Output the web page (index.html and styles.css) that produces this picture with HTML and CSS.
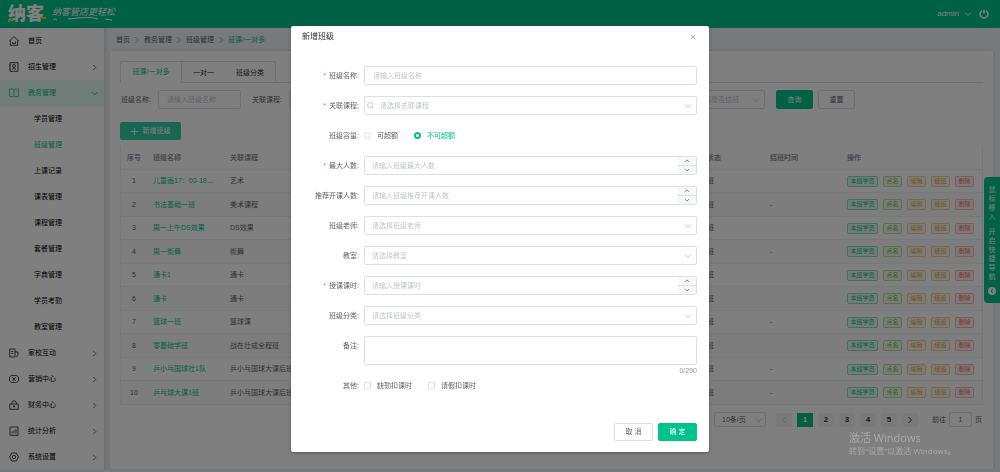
FILE: index.html
```html
<!DOCTYPE html>
<html lang="zh-CN">
<head>
  <meta charset="UTF-8">
  <title>班级管理</title>
  <link rel="stylesheet" href="styles.css">
</head>
<body>
  <svg class="defs" aria-hidden="true">
    <symbol id="down" viewBox="0 0 8 8"><path d="M1 2.5l3 3 3-3"/></symbol>
    <symbol id="up" viewBox="0 0 8 8"><path d="M1 5.5l3-3 3 3"/></symbol>
    <symbol id="right" viewBox="0 0 8 8"><path d="M2.5 1l3 3-3 3"/></symbol>
    <symbol id="left" viewBox="0 0 8 8"><path d="M5.5 1l-3 3 3 3"/></symbol>
  </svg>

  <header class="header">
    <div class="logo">
      纳客
      <svg class="logo-mark" viewBox="0 0 38 6"><path d="M0 5l5-3M32 1h6"/></svg>
    </div>
    <div class="slogan">
      纳客管店更轻松
      <svg viewBox="0 0 66 4"><path d="M1 3q2-2 4 0M16 2q22-3 30 0M53 2l7 1"/></svg>
    </div>
    <div class="user">
      <span>admin</span>
      <svg class="ico"><use href="#down"/></svg>
      <button class="power" aria-label="退出">
        <svg viewBox="0 0 10 10"><path d="M3 1.6a4 4 0 1 0 4 0M5 .5v4"/></svg>
      </button>
    </div>
  </header>

  <div class="layout">
    <nav class="sidebar">
      <a href="#"><svg class="menu-ico" viewBox="0 0 10 10"><path d="M.5 4.5L5 .7l4.500 3.800M1.300 4v5.300h7.400V4M3.500 7.500h3M3.500 7.500V6M6.500 7.500V5.500"/></svg>首页</a>
      <a href="#"><svg class="menu-ico" viewBox="0 0 10 10"><path d="M1 .7h8v8.600H1zM3 7.500q2-2.500 4 0M0 3h1.500M0 7h1.500"/><circle cx="5" cy="4" r="1.500"/></svg>招生管理<svg class="ico"><use href="#right"/></svg></a>
      <a href="#" class="open"><svg class="menu-ico" viewBox="0 0 10 10"><path d="M.5 1h3.500l1 1 1-1h3.500v7.500H6l-1 1-1-1H.5zM5 2v7M6.800 3.500h1.200"/></svg>教务管理<svg class="ico"><use href="#down"/></svg></a>
      <a href="#" class="sub">学员管理</a>
      <a href="#" class="sub active">班级管理</a>
      <a href="#" class="sub">上课记录</a>
      <a href="#" class="sub">课表管理</a>
      <a href="#" class="sub">课程管理</a>
      <a href="#" class="sub">套餐管理</a>
      <a href="#" class="sub">字典管理</a>
      <a href="#" class="sub">学员考勤</a>
      <a href="#" class="sub">教室管理</a>
      <a href="#"><svg class="menu-ico" viewBox="0 0 10 10"><path d="M.7 1h5.300v8H.7zM2.200 3.500h2M2.200 5.500h2M6 4h3v3L7.500 9"/></svg>家校互动<svg class="ico"><use href="#right"/></svg></a>
      <a href="#"><svg class="menu-ico" viewBox="0 0 10 10"><path d="M.5 3l2-1.500h5L9.500 3v4l-2 1.500h-5L.5 7zM3.500 3l3 4M6.500 3l-3 4"/></svg>营销中心<svg class="ico"><use href="#right"/></svg></a>
      <a href="#"><svg class="menu-ico" viewBox="0 0 10 10"><path d="M.8 4h8.400v5.300H.8zM2.500 4q0-3.300 2.500-3.300T7.500 4M5 5.500v2.200M4 6.200h2"/></svg>财务中心<svg class="ico"><use href="#right"/></svg></a>
      <a href="#"><svg class="menu-ico" viewBox="0 0 10 10"><path d="M1 1h8v8.300H1zM3 7.500V5.500M5 7.500V4M7 7.500V3"/></svg>统计分析<svg class="ico"><use href="#right"/></svg></a>
      <a href="#"><svg class="menu-ico" viewBox="0 0 10 10"><path d="M2.500 1h5l.5 1.500L9.500 5 8 7.500 7.500 9h-5L2 7.500.5 5 2 2.500z"/><circle cx="5" cy="5" r="1.700"/></svg>系统设置<svg class="ico"><use href="#right"/></svg></a>
    </nav>

    <main class="main">
      <div class="breadcrumb">
        <a href="#">首页</a><svg class="ico"><use href="#right"/></svg>
        <a href="#">教务管理</a><svg class="ico"><use href="#right"/></svg>
        <a href="#">班级管理</a><svg class="ico"><use href="#right"/></svg>
        <span class="current">班课/一对多</span>
      </div>

      <section class="card">
        <div class="tabs">
          <button class="tab active">班课/一对多</button>
          <button class="tab">一对一</button>
          <button class="tab">班级分类</button>
        </div>

        <form class="filters">
          <div class="filter"><label for="f-name">班级名称:</label><input id="f-name" class="input" placeholder="请输入班级名称"></div>
          <div class="filter"><label for="f-course">关联课程:</label><div class="select"><select id="f-course" class="input"><option>请选择课程</option></select><svg class="ico"><use href="#down"/></svg></div></div>
          <div class="filter"><label for="f-teacher">班级老师:</label><div class="select"><select id="f-teacher" class="input"><option>请选择老师</option></select><svg class="ico"><use href="#down"/></svg></div></div>
          <div class="filter"><label for="f-type">班级分类:</label><div class="select"><select id="f-type" class="input"><option>请选择分类</option></select><svg class="ico"><use href="#down"/></svg></div></div>
          <div class="filter"><label for="f-end">是否结班:</label><div class="select"><select id="f-end" class="input"><option>请选择是否结班</option></select><svg class="ico"><use href="#down"/></svg></div></div>
          <div class="filter-btns">
            <button type="button" class="btn primary">查询</button>
            <button type="button" class="btn">重置</button>
          </div>
        </form>

        <button class="btn add"><svg class="plus" viewBox="0 0 8 8"><path d="M4 0v8M0 4h8"/></svg>新增班级</button>

        <table class="table">
          <thead>
            <tr>
              <th class="c-no">序号</th>
              <th class="c-name">班级名称</th>
              <th>关联课程</th>
              <th class="c-status">班级状态</th>
              <th class="c-time">结班时间</th>
              <th class="c-ops">操作</th>
            </tr>
          </thead>
          <tbody id="rows"></tbody>
        </table>

        <div class="pagination">
          <div class="select size"><select class="input" aria-label="每页条数"><option>10条/页</option></select><svg class="ico"><use href="#down"/></svg></div>
          <div class="pages">
            <button class="off" aria-label="上一页"><svg class="ico"><use href="#left"/></svg></button>
            <button class="on">1</button>
            <button>2</button>
            <button>3</button>
            <button>4</button>
            <button>5</button>
            <button aria-label="下一页"><svg class="ico"><use href="#right"/></svg></button>
          </div>
          <label class="jump">前往 <input class="input" value="1"> 页</label>
        </div>
      </section>
    </main>
  </div>

  <aside class="quick">
    <span>鼠标移入</span>
    <span>开启快捷导航</span>
    <svg viewBox="0 0 8 8"><circle cx="4" cy="4" r="4"/><path d="M5 2L3 4l2 2"/></svg>
  </aside>

  <div class="mask">
    <div class="dialog" role="dialog" aria-labelledby="dialog-title">
      <div class="dialog-header">
        <h2 id="dialog-title">新增班级</h2>
        <button class="close" aria-label="关闭"><svg viewBox="0 0 8 8"><path d="M1 1l6 6M7 1L1 7"/></svg></button>
      </div>

      <form class="form">
        <div class="row">
          <label class="label required" for="name">班级名称:</label>
          <input id="name" class="input" placeholder="请输入班级名称">
        </div>
        <div class="row">
          <label class="label required" for="course">关联课程:</label>
          <div class="select with-search">
            <svg class="search" viewBox="0 0 8 8"><circle cx="3.500" cy="3.500" r="2.900"/><path d="M5.600 5.600L7.500 7.500"/></svg>
            <select id="course" class="input"><option>请选择关联课程</option></select>
            <svg class="ico"><use href="#down"/></svg>
          </div>
        </div>
        <div class="row">
          <span class="label">班级容量:</span>
          <div class="choices">
            <label><input type="radio" name="cap">可超额</label>
            <label><input type="radio" name="cap" checked><span>不可超额</span></label>
          </div>
        </div>
        <div class="row">
          <label class="label required" for="max">最大人数:</label>
          <div class="number">
            <input id="max" class="input" type="number" placeholder="请输入班级最大人数">
            <div class="steps"><button type="button" aria-label="增加"><svg class="ico"><use href="#up"/></svg></button><button type="button" aria-label="减少"><svg class="ico"><use href="#down"/></svg></button></div>
          </div>
        </div>
        <div class="row">
          <label class="label" for="min">推荐开课人数:</label>
          <div class="number">
            <input id="min" class="input" type="number" placeholder="请输入班级推荐开课人数">
            <div class="steps"><button type="button" aria-label="增加"><svg class="ico"><use href="#up"/></svg></button><button type="button" aria-label="减少"><svg class="ico"><use href="#down"/></svg></button></div>
          </div>
        </div>
        <div class="row">
          <label class="label" for="teacher">班级老师:</label>
          <div class="select"><select id="teacher" class="input"><option>请选择班级老师</option></select><svg class="ico"><use href="#down"/></svg></div>
        </div>
        <div class="row">
          <label class="label" for="room">教室:</label>
          <div class="select"><select id="room" class="input"><option>请选择教室</option></select><svg class="ico"><use href="#down"/></svg></div>
        </div>
        <div class="row">
          <label class="label required" for="hours">授课课时:</label>
          <div class="number">
            <input id="hours" class="input" type="number" placeholder="请输入授课课时">
            <div class="steps"><button type="button" aria-label="增加"><svg class="ico"><use href="#up"/></svg></button><button type="button" aria-label="减少"><svg class="ico"><use href="#down"/></svg></button></div>
          </div>
        </div>
        <div class="row">
          <label class="label" for="type">班级分类:</label>
          <div class="select"><select id="type" class="input"><option>请选择班级分类</option></select><svg class="ico"><use href="#down"/></svg></div>
        </div>
        <div class="row">
          <label class="label" for="remark">备注:</label>
          <div class="remark">
            <textarea id="remark" class="input" maxlength="200"></textarea>
            <span class="count">0/200</span>
          </div>
        </div>
        <div class="row">
          <span class="label">其他:</span>
          <div class="choices">
            <label><input type="checkbox">缺勤扣课时</label>
            <label><input type="checkbox">请假扣课时</label>
          </div>
        </div>
      </form>

      <div class="dialog-footer">
        <button class="btn">取 消</button>
        <button class="btn primary">确 定</button>
      </div>
    </div>
  </div>

  <div class="watermark">
    <p class="big">激活 Windows</p>
    <p>转到"设置"以激活 Windows。</p>
  </div>

  <script src="script.js"></script>
</body>
</html>
```

FILE: styles.css
```css
* {
  box-sizing: border-box;
}
body {
  margin: 0;
  font-family: "Liberation Sans", "Noto Sans CJK SC", sans-serif;
  font-size: 7px;
  line-height: 12px;
  color: #606266;
  background: #f0f2f5;
}
button, input, select, textarea {
  font: inherit;
  color: inherit;
  margin: 0;
}
button {
  padding: 0;
  border: 0;
  background: none;
  cursor: pointer;
}
a {
  color: inherit;
  text-decoration: none;
}
svg {
  display: block;
  fill: none;
  stroke: currentColor;
}
.defs {
  position: absolute;
  width: 0;
  height: 0;
}
.ico {
  width: 8px;
  height: 8px;
  flex: none;
}

/* header */
.header {
  display: flex;
  align-items: center;
  height: 28px;
  padding: 0 11px 0 8px;
  color: #fff;
  background: #00c28a;
}
.logo {
  position: relative;
  font-size: 18px;
  font-weight: 900;
  line-height: 24px;
}
.logo-mark {
  position: absolute;
  left: 0;
  bottom: 3px;
  width: 38px;
  height: 6px;
  stroke: #ffc117;
  stroke-width: 2;
}
.slogan {
  margin-left: 8px;
  font-size: 9px;
  font-style: italic;
  line-height: 10px;
}
.slogan svg {
  width: 66px;
  height: 4px;
}
.user {
  display: flex;
  align-items: center;
  gap: 5px;
  margin-left: auto;
  font-size: 8px;
}
.power svg {
  width: 10px;
  height: 10px;
  margin-left: 2px;
  stroke-width: 1.500;
}

/* sidebar */
.layout {
  display: flex;
}
.sidebar {
  width: 104px;
  flex: none;
  background: #fff;
  box-shadow: 1px 0 4px rgba(0, 0, 0, .15);
}
.sidebar a {
  display: flex;
  align-items: center;
  height: 26px;
  padding: 0 6px 0 9px;
  color: #000;
}
.sidebar .sub {
  padding-left: 34px;
}
.sidebar .open {
  color: #00c28a;
  background: #e0f8f1;
}
.sidebar .active {
  color: #00c28a;
}
.sidebar .ico {
  width: 7px;
  height: 7px;
  margin-left: auto;
  color: #606266;
}
.sidebar .open .ico {
  color: #00c28a;
}
.menu-ico {
  width: 10px;
  height: 10px;
  margin-right: 9px;
  stroke-width: .7;
}

/* main */
.main {
  flex: 1;
  display: flex;
  flex-direction: column;
  min-width: 0;
  padding: 0 7px 1px 6px;
}
.breadcrumb {
  display: flex;
  align-items: center;
  gap: 3px;
  height: 23px;
  padding-left: 6px;
}
.breadcrumb .ico {
  stroke: #a8abb2;
}
.breadcrumb .current {
  color: #00c28a;
}
.card {
  flex: 1;
  padding: 10px;
  background: #fff;
  box-shadow: 0 0 3px rgba(0, 0, 0, .12);
}
.tabs {
  display: flex;
  height: 22px;
  border-bottom: 1px solid #dcdfe6;
}
.tab {
  height: 22px;
  padding: 0 11px;
  border-top: 1px solid #dcdfe6;
  color: #303133;
}
.tab.active {
  width: 62px;
  border: 1px solid #dcdfe6;
  border-bottom-color: #fff;
  border-radius: 2px 0 0 0;
  color: #00c28a;
}
.tab:last-child {
  border-right: 1px solid #dcdfe6;
  border-radius: 0 2px 0 0;
}

.input {
  display: block;
  width: 100%;
  height: 19px;
  padding: 0 8px;
  border: 1px solid #dcdfe6;
  border-radius: 2px;
  background: #fff;
  outline: none;
  appearance: none;
}
.input::placeholder {
  color: #c0c4cc;
}
select.input {
  padding: 0 7px;
  color: #c0c4cc;
}
.select {
  position: relative;
  flex: 1;
}
.select .ico {
  position: absolute;
  top: 6px;
  right: 5px;
  color: #c0c4cc;
  pointer-events: none;
}

.filters {
  display: flex;
  gap: 11px;
  margin-top: 7px;
  padding-left: 1px;
}
.filter {
  display: flex;
  align-items: center;
  width: 120px;
  flex: none;
}
.filter label {
  width: 37px;
  flex: none;
}
.filter .input {
  min-width: 0;
}
.filter-btns {
  display: flex;
  gap: 5px;
}
.btn {
  width: 37px;
  height: 19px;
  border: 1px solid #dcdfe6;
  border-radius: 2px;
  background: #fff;
}
.btn.primary {
  border-color: #00c28a;
  color: #fff;
  background: #00c28a;
}
.btn.add {
  display: flex;
  align-items: center;
  justify-content: center;
  gap: 5px;
  width: 61px;
  height: 18px;
  margin-top: 13px;
  border: 0;
  color: #fff;
  background: #33cea1;
}
.plus {
  width: 7px;
  height: 7px;
}

/* table */
.table {
  width: 100%;
  margin-top: 6px;
  table-layout: fixed;
  border-collapse: separate;
  border-spacing: 0;
  border: solid #ebeef5;
  border-width: 0 1px;
}
.table th {
  height: 24px;
  font-weight: bold;
  color: #909399;
}
.table th, .table td {
  padding: 0 6px;
  border-bottom: 1px solid #ebeef5;
  text-align: left;
  white-space: nowrap;
  overflow: hidden;
  text-overflow: ellipsis;
}
.table td {
  height: 23px;
}
.table tr:nth-child(even) td {
  height: 24px;
  background: #fafafa;
}
.table .c-no {
  width: 26px;
  text-align: center;
}
.table .c-name {
  width: 77px;
}
.table .c-status {
  width: 77px;
}
.table .c-time {
  width: 77px;
}
.table .c-ops {
  width: 141px;
  padding-right: 8px;
}
.name {
  color: #00c28a;
}
.ops {
  display: flex;
  gap: 5px;
}
.tag {
  flex: 1;
  height: 11px;
  border: 1px solid;
  border-radius: 2px;
  font-size: 6px;
  line-height: 9px;
}
.tag.wide {
  flex: none;
  width: 31px;
}
.tag.teal {
  color: #00c28a;
  border-color: #80e0c4;
  background: #e6f9f3;
}
.tag.green {
  color: #67c23a;
  border-color: #b3e09c;
  background: #f0f9eb;
}
.tag.orange {
  color: #e6a23c;
  border-color: #f3d19e;
  background: #fdf6ec;
}
.tag.red {
  color: #f56c6c;
  border-color: #fab6b6;
  background: #fef0f0;
}

.pagination {
  display: flex;
  justify-content: flex-end;
  align-items: center;
  margin-top: 7px;
  font-size: 8px;
}
.pagination .input {
  height: 15px;
}
.size {
  flex: none;
  width: 52px;
  margin-right: 10px;
}
.size .input {
  color: #606266;
  font-size: 7px;
}
.size .ico {
  top: 4px;
  right: 3px;
}
.pages {
  display: flex;
  gap: 5px;
}
.pages button {
  display: flex;
  align-items: center;
  justify-content: center;
  width: 16px;
  height: 14px;
  font-weight: bold;
  color: #303133;
  background: #f4f4f5;
}
.pages .on {
  color: #fff;
  background: #00c28a;
}
.pages .off {
  color: #c0c4cc;
}
.jump {
  display: flex;
  align-items: center;
  gap: 3px;
  margin: 0 1px 0 14px;
  font-size: 7px;
}
.jump .input {
  width: 23px;
  text-align: center;
}

/* floating entry on the right edge */
.quick {
  position: fixed;
  top: 177px;
  right: 0;
  display: flex;
  flex-direction: column;
  align-items: center;
  gap: 6px;
  width: 16px;
  padding: 8px 4px;
  border-radius: 4px 0 0 4px;
  color: #fff;
  background: #00c28a;
  line-height: 9px;
}
.quick span {
  width: 7px;
  word-break: break-all;
}
.quick svg {
  width: 8px;
  height: 8px;
}
.quick circle {
  fill: #fff;
  stroke: none;
}
.quick path {
  stroke: #00c28a;
}

/* dialog */
.mask {
  position: fixed;
  inset: 0;
  padding-top: 26px;
  background: rgba(0, 0, 0, .5);
  overflow: auto;
}
.dialog {
  width: 418px;
  margin: 0 auto;
  padding: 0 12px 11px 11px;
  border-radius: 2px;
  background: #fff;
  box-shadow: 0 1px 3px rgba(0, 0, 0, .3);
}
.dialog-header {
  display: flex;
  align-items: center;
  justify-content: space-between;
  height: 22px;
}
.dialog-header h2 {
  margin: 0;
  font-size: 8px;
  font-weight: normal;
  color: #303133;
}
.close svg {
  width: 6px;
  height: 6px;
  margin-right: 1px;
  color: #909399;
}
.form {
  display: flex;
  flex-direction: column;
  gap: 11px;
  padding-top: 18px;
}
.row {
  display: flex;
}
.label {
  width: 62px;
  flex: none;
  padding-right: 5px;
  line-height: 19px;
  text-align: right;
}
.required::before {
  content: "*";
  margin-right: 3px;
  color: #f56c6c;
}
.with-search select.input {
  padding-left: 15px;
}
.search {
  position: absolute;
  top: 6px;
  left: 3px;
  width: 7px;
  height: 7px;
  color: #c0c4cc;
}
.choices {
  display: flex;
  align-items: center;
  gap: 16px;
  height: 19px;
}
.choices label {
  display: flex;
  align-items: center;
  gap: 6px;
}
.choices input {
  width: 7px;
  height: 7px;
  border: 1px solid #dcdfe6;
  border-radius: 1px;
  background: #fff;
  appearance: none;
}
.choices input[type="radio"] {
  border-radius: 50%;
}
.choices input:checked {
  border: 2px solid #00c28a;
}
.choices input:checked + span {
  color: #00c28a;
}
.number {
  display: flex;
  flex: 1;
  border: 1px solid #dcdfe6;
  border-radius: 2px;
}
.number .input {
  height: 17px;
  padding: 0 7px;
  border: 0;
}
.number input::-webkit-inner-spin-button {
  appearance: none;
}
.steps {
  display: flex;
  flex-direction: column;
  width: 18px;
  flex: none;
  background: #f5f7fa;
}
.steps button {
  display: flex;
  align-items: center;
  justify-content: center;
  flex: 1;
}
.steps button + button {
  border-top: 1px solid #dcdfe6;
}
.steps .ico {
  width: 6px;
  height: 6px;
}
.remark {
  position: relative;
  flex: 1;
}
.remark textarea {
  height: 29px;
  resize: none;
}
.count {
  position: absolute;
  top: 29px;
  right: 0;
  color: #909399;
}
.dialog-footer {
  display: flex;
  justify-content: flex-end;
  gap: 5px;
  margin-top: 28px;
}
.dialog-footer .btn {
  width: 39px;
  height: 18px;
}

.watermark {
  position: fixed;
  right: 49px;
  bottom: 15px;
  width: 102px;
  font-family: "Open Sans", "Noto Sans CJK SC", sans-serif;
  font-size: 8px;
  color: #a9a9a9;
  white-space: nowrap;
  pointer-events: none;
}
.watermark p {
  margin: 0;
}
.watermark .big {
  font-size: 11px;
  line-height: 15px;
}
```

FILE: script.js
```js
const classes = [
  ['儿童画17：00-18：00', '艺术', '未开班', ''],
  ['书法基础一班', '美术课程', '未结班', '-'],
  ['周一上午DS效果', 'DS效果', '未开班', ''],
  ['周一街舞', '街舞', '未结班', '-'],
  ['通卡1', '通卡', '未结班', ''],
  ['通卡', '通卡', '未开班', ''],
  ['篮球一班', '篮球课', '未结班', '-'],
  ['零基础学班', '战在壮成全程班', '未开班', ''],
  ['乒小乓国球社1队', '乒小乓国球大课后班', '未结班', '-'],
  ['乒乓球大课1班', '乒小乓国球大课后班', '未结班', '-']
];

document.getElementById('rows').innerHTML = classes.map(([name, course, status, end], i) => `
  <tr>
    <td class="c-no">${i + 1}</td>
    <td><a href="#" class="name">${name}</a></td>
    <td>${course}</td>
    <td>${status}</td>
    <td>${end}</td>
    <td class="c-ops">
      <div class="ops">
        <button class="tag wide teal">本班学员</button>
        <button class="tag green">点名</button>
        <button class="tag orange">编辑</button>
        <button class="tag orange">结班</button>
        <button class="tag red">删除</button>
      </div>
    </td>
  </tr>`).join('');
```
